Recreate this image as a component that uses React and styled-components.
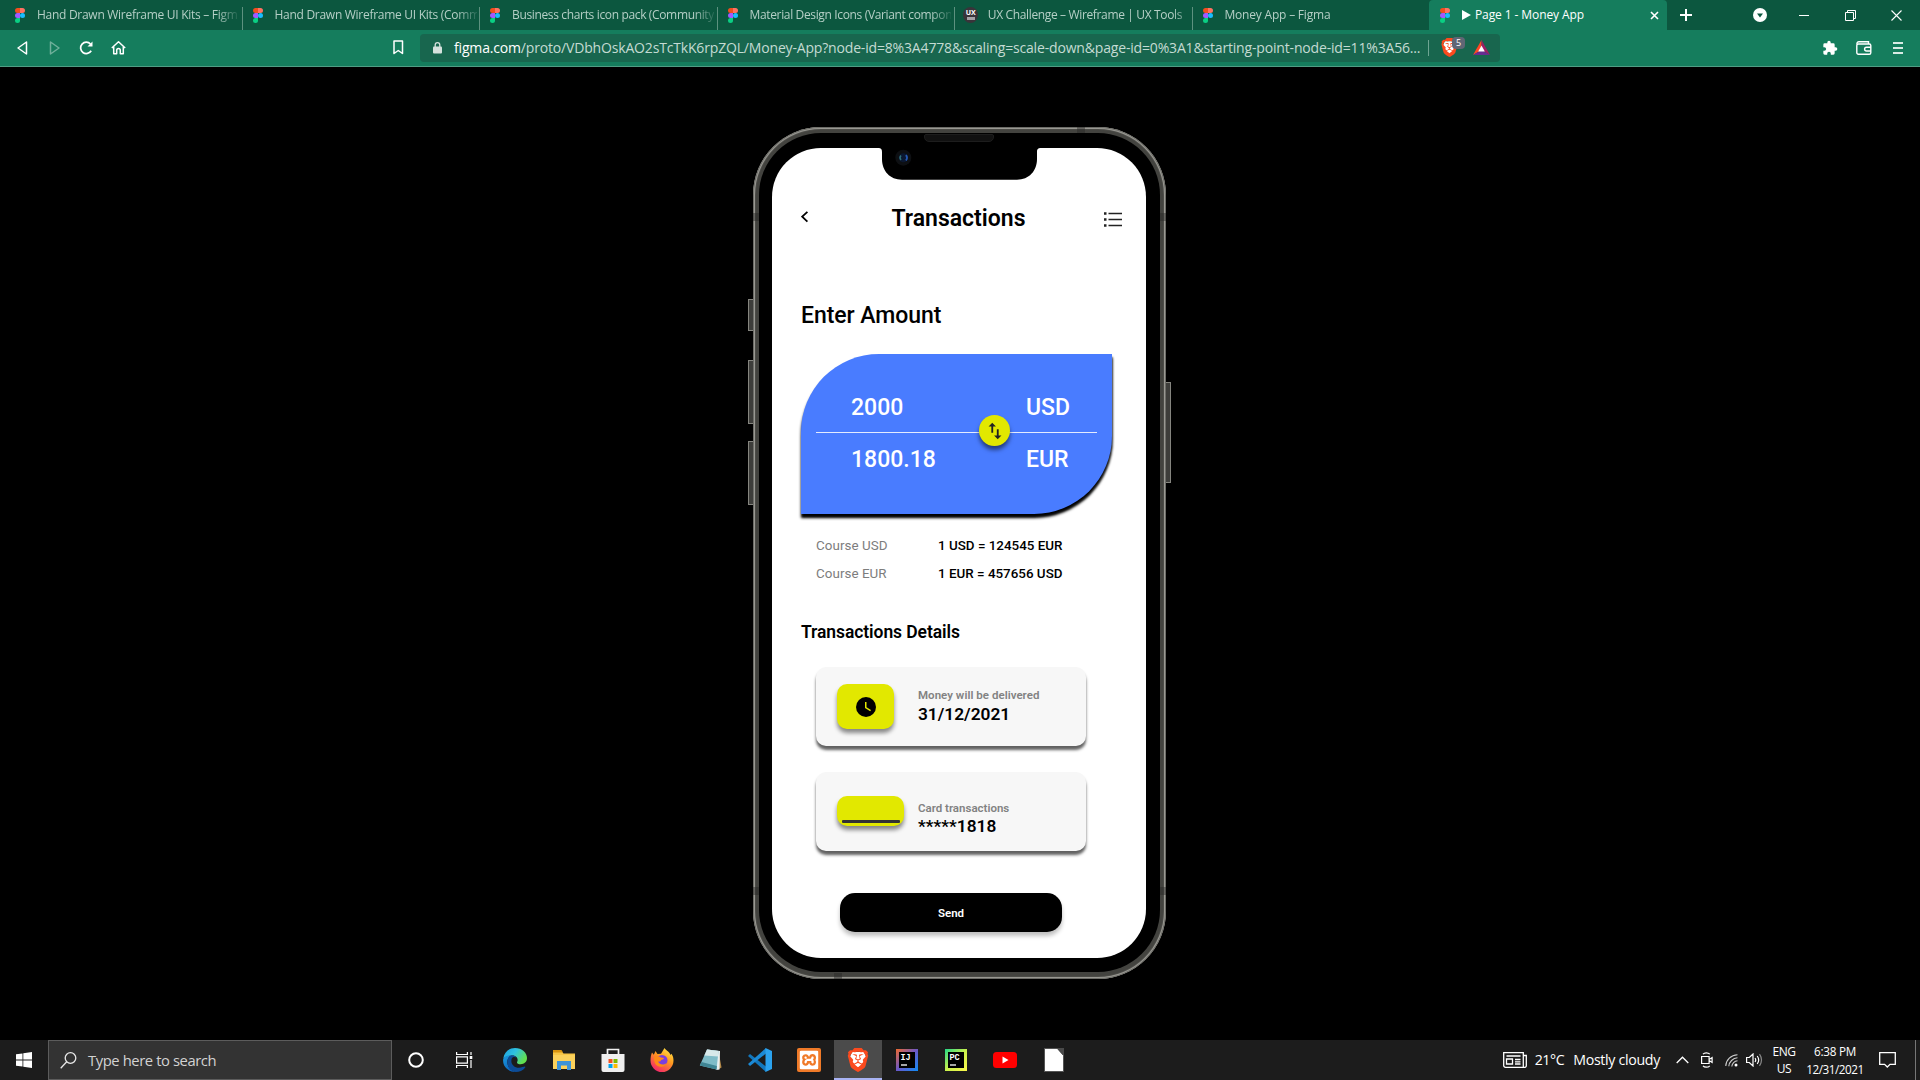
import React from "react";
import styled, { createGlobalStyle, css } from "styled-components";
import { SiBrave, SiXampp } from "react-icons/si";

const Global = createGlobalStyle`
  * { box-sizing: border-box; }
  body { margin: 0; background: #000; overflow: hidden; }
`;

const Page = styled.div`
  width: 1920px;
  height: 1080px;
  display: flex;
  flex-direction: column;
  background: #000;
  font-family: "Open Sans", "Noto Sans", sans-serif;
  overflow: hidden;
`;

const Label = styled.span`
  display: block;
  flex: none;
  white-space: nowrap;
  font-size: ${(p) => p.$size || 12}px;
  line-height: ${(p) => p.$lh || 20}px;
  font-weight: ${(p) => p.$weight || 400};
  letter-spacing: ${(p) => p.$ls || 0}px;
  color: ${(p) => p.$color || "#fff"};
`;

/* ---------- browser ---------- */
const TabStrip = styled.header`
  flex: none;
  height: 30px;
  padding-left: 5px;
  display: flex;
  background: #0c573f;
`;
const Tab = styled.div`
  flex: none;
  width: 237.5px;
  height: 30px;
  padding-left: 10px;
  display: flex;
  align-items: center;
  position: relative;
  ${(p) =>
    p.$active &&
    css`
      width: 238px;
      margin-left: -1px;
      padding-left: 11px;
      background: #157d5d;
      border-radius: 4px 4px 0 0;
    `}
  ${(p) =>
    p.$divider &&
    css`
      &::after {
        content: "";
        position: absolute;
        right: 0;
        top: 7px;
        width: 1px;
        height: 23px;
        background: #5d917f;
      }
    `}
`;
const TabTitle = styled.div`
  margin-left: ${(p) => p.$gap}px;
  width: ${(p) => p.$w}px;
  overflow: hidden;
  mask-image: linear-gradient(90deg, #000 90%, rgba(0, 0, 0, 0.15));
`;
const PlayMark = styled.svg`
  flex: none;
  margin: 0 4px 0 12px;
`;
const TabClose = styled.div`
  display: flex;
  margin-left: auto;
  margin-right: 8px;
`;
const WindowTools = styled.div`
  flex: 1;
  display: flex;
  align-items: center;
  padding: 0 17px 0 13px;
  svg { flex: none; }
`;
const Toolbar = styled.div`
  flex: none;
  height: 37px;
  display: flex;
  align-items: center;
  padding: 0 17px 1px 16px;
  background: #157d5d;
  border-bottom: 1px solid #4f9d84;
  svg { flex: none; display: block; }
`;
const NavGroup = styled.div`
  width: 377px;
  display: flex;
  gap: 15.5px;
  align-items: center;
`;
const Address = styled.div`
  margin-left: 16px;
  width: 1080px;
  height: 28px;
  border-radius: 4px;
  background: #18664e;
  display: flex;
  align-items: center;
  padding-left: 13px;
`;
const Url = styled.div`
  margin-left: 12px;
  width: 966px;
  display: flex;
`;
const Divider = styled.i`
  width: 1px;
  height: 16px;
  margin: 0 11px 0 8px;
  background: #6ea593;
`;
const Shield = styled.div`
  position: relative;
  width: 33px;
  height: 19px;
  display: flex;
`;
const Badge = styled.span`
  position: absolute;
  left: 12px;
  top: -1px;
  width: 13px;
  height: 12px;
  border-radius: 4px;
  background: #5f6675;
  color: #fff;
  font-size: 9px;
  line-height: 12px;
  text-align: center;
`;
const ToolEnd = styled.div`
  margin-left: auto;
  display: flex;
  align-items: center;
`;

/* ---------- phone ---------- */
const Stage = styled.main`
  flex: 1;
  padding: 60px 0 0 753px;
`;
const Phone = styled.div`
  position: relative;
  width: 413px;
  height: 852px;
  padding: 6px 6px 7px;
  border-radius: 68px;
  background: #43433f;
  box-shadow: inset 0 0 0 1px #6c6c67, inset 0 0 1px 2px #a3a29c;
`;
const Bezel = styled.div`
  height: 839px;
  padding: 15px 14px 14px 13px;
  border-radius: 62px;
  background: #000;
`;
const SideKey = styled.i`
  position: absolute;
  left: ${(p) => (p.$right ? 413 : -5)}px;
  top: ${(p) => p.$top}px;
  width: 5px;
  height: ${(p) => p.$h}px;
  background: #3d3d3a;
  border: 1px solid #85857f;
  border-${(p) => (p.$right ? "left" : "right")}: 0;
`;
const Band = styled.i`
  position: absolute;
  left: ${(p) => p.$x}px;
  top: ${(p) => p.$y}px;
  width: ${(p) => (p.$flat ? 8 : 6)}px;
  height: ${(p) => (p.$flat ? 6 : 8)}px;
  background: rgba(40, 40, 38, 0.45);
`;
const Speaker = styled.i`
  position: absolute;
  left: 171px;
  top: 7px;
  width: 70px;
  height: 8px;
  border-radius: 2px 2px 5px 5px;
  background: #111;
  border: 1px solid #1d1d1d;
`;
const Notch = styled.div`
  position: absolute;
  left: 125px;
  top: 20px;
`;
const Screen = styled.div`
  height: 810px;
  border-radius: 49px;
  background: #fff;
  font-family: Roboto, sans-serif;
  display: flex;
  flex-direction: column;
  overflow: hidden;
`;
const AppBar = styled.div`
  margin-top: 51px;
  height: 40px;
  padding: 0 24px 0 29px;
  display: flex;
  align-items: center;
  justify-content: space-between;
`;
const BackIcon = styled.svg`
  margin-bottom: 4px;
`;
const Heading = styled.div`
  margin: ${(p) => p.$top}px 0 0 29px;
  display: flex;
`;
const Exchange = styled.section`
  position: relative;
  margin: 23px 0 0 29px;
  width: 311px;
  height: 160px;
  padding-top: 31px;
  border-radius: 78px 0 78px 0;
  background: #497cff;
  box-shadow: 0 4px 3px #000, 1px 3px 2px rgba(0, 0, 0, 0.5);
`;
const MoneyRow = styled.div`
  height: 46px;
  padding-left: 50px;
  display: grid;
  grid-template-columns: 175px 1fr;
  align-items: center;
`;
const Rule = styled.i`
  display: block;
  width: 281px;
  height: 1px;
  margin: 1px 0 4px 15px;
  background: #e4ebff;
`;
const Swap = styled.div`
  position: absolute;
  left: 178px;
  top: 61px;
  width: 31px;
  height: 31px;
  border-radius: 50%;
  background: #e2e800;
  box-shadow: 0 4px 4px rgba(0, 0, 0, 0.5);
  display: flex;
  align-items: center;
  justify-content: center;
`;
const Rates = styled.div`
  margin: 18px 0 0 44px;
  display: grid;
  grid-template-columns: 122px 1fr;
  grid-auto-rows: 28px;
  align-items: center;
`;
const Cards = styled.div`
  margin: 23px 0 0 44px;
  display: flex;
  flex-direction: column;
  gap: 26px;
`;
const Card = styled.div`
  width: 270px;
  height: 79px;
  padding-left: 21px;
  border-radius: 10px;
  background: #f7f7f7;
  box-shadow: 0 4px 3px rgba(0, 0, 0, 0.62);
  display: flex;
  align-items: flex-start;
`;
const Tile = styled.div`
  width: ${(p) => p.$w}px;
  height: ${(p) => p.$h}px;
  margin-top: ${(p) => p.$top}px;
  border-radius: 10px;
  background: #e2e800;
  box-shadow: 0 4px 4px rgba(0, 0, 0, 0.45);
  display: flex;
  align-items: ${(p) => (p.$end ? "flex-end" : "center")};
  justify-content: center;
`;
const Stripe = styled.i`
  width: 58px;
  height: 3px;
  margin-bottom: 3px;
  border-radius: 1px;
  background: #333;
`;
const CardText = styled.div`
  margin-left: ${(p) => p.$left}px;
  margin-top: ${(p) => p.$top}px;
  display: flex;
  flex-direction: column;
`;
const Send = styled.button`
  margin: 42px 0 0 68px;
  width: 222px;
  height: 39px;
  padding: 0;
  border: 0;
  border-radius: 15px;
  background: #000;
  box-shadow: 0 4px 4px rgba(0, 0, 0, 0.25);
  font-family: inherit;
  display: flex;
  align-items: center;
  justify-content: center;
`;

/* ---------- taskbar ---------- */
const Taskbar = styled.footer`
  flex: none;
  height: 40px;
  display: flex;
  background: #1c1c1c;
`;
const Slot = styled.div`
  flex: none;
  width: ${(p) => p.$w || 49}px;
  height: 40px;
  display: flex;
  align-items: center;
  justify-content: center;
  ${(p) =>
    p.$active &&
    css`
      margin-left: 1px;
      padding-top: 2px;
      background: #4b4b4b;
      border-bottom: 2px solid #a9b3f3;
    `}
`;
const Search = styled.div`
  width: 344px;
  height: 40px;
  border: 1px solid #5c5c5c;
  background: #333;
  padding-left: 11px;
  display: flex;
  align-items: center;
  gap: 11px;
`;
const Tray = styled.div`
  margin-left: auto;
  display: flex;
  align-items: center;
  svg { flex: none; }
`;
const Stack = styled.div`
  margin-left: ${(p) => p.$left}px;
  width: ${(p) => p.$w}px;
  display: flex;
  flex-direction: column;
  align-items: center;
`;
const Gap = styled.i`
  flex: none;
  width: ${(p) => p.$w}px;
`;
const Edge = styled.i`
  width: 1px;
  height: 40px;
  background: #777;
  margin: 0 4px 0 19px;
`;

const FigmaMark = () => (
  <svg width="10" height="15" viewBox="0 0 10 15">
    <path d="M2.5 0H5v5H2.5a2.5 2.5 0 0 1 0-5z" fill="#f24e1e" />
    <path d="M5 0h2.5a2.5 2.5 0 0 1 0 5H5z" fill="#ff7262" />
    <path d="M2.5 5H5v5H2.5a2.5 2.5 0 0 1 0-5z" fill="#a259ff" />
    <circle cx="7.5" cy="7.5" r="2.5" fill="#1abcfe" />
    <path d="M2.5 10H5v2.5A2.5 2.5 0 1 1 2.500 10z" fill="#0acf83" />
  </svg>
);

const BraveMark = ({ size }) => (
  <svg width={size} height={size} viewBox="0 0 24 24">
    <path d="M6 4h12l2 5-3 9-5 4-5-4L4 9z" fill="#fff" />
    <SiBrave size={24} color="#fb4a1e" />
  </svg>
);

const UxBadge = styled.div`
  width: 16px;
  height: 16px;
  margin-left: -2px;
  border-radius: 50%;
  background: #39343a;
  color: #fff;
  font: 700 7px/6px "Open Sans", sans-serif;
  text-align: center;
  padding-top: 3px;
  &::after {
    content: "";
    display: block;
    width: 8px;
    height: 3px;
    margin: 1px auto 0;
    background: #a5a2a6;
  }
`;

const TABS = [
  { t: "Hand Drawn Wireframe UI Kits – Figma", w: 200, ls: -0.28 },
  { t: "Hand Drawn Wireframe UI Kits (Community)", w: 202, ls: -0.28 },
  { t: "Business charts icon pack (Community)", w: 202, ls: -0.35 },
  { t: "Material Design Icons (Variant components)", w: 201, ls: -0.35 },
  { t: "UX Challenge – Wireframe | UX Tools", w: 215, ls: -0.35, ux: true },
  { t: "Money App – Figma", w: 190, ls: -0.2, last: true },
];

function Browser() {
  return (
    <>
      <TabStrip>
        {TABS.map((tab) => (
          <Tab key={tab.t} $divider={!tab.last}>
            {tab.ux ? <UxBadge>UX</UxBadge> : <FigmaMark />}
            <TabTitle $w={tab.w} $gap={tab.ux ? 9.500 : 12}>
              <Label $size={12} $ls={tab.ls} $color="#b5cfc6">{tab.t}</Label>
            </TabTitle>
          </Tab>
        ))}
        <Tab $active>
          <FigmaMark />
          <PlayMark width="9" height="12" viewBox="0 0 9 12">
            <path d="M0 1v10l9-5z" fill="#fff" />
          </PlayMark>
          <Label $size={12} $ls={-0.1} $weight={500}>Page 1 - Money App</Label>
          <TabClose>
            <svg width="9" height="9" viewBox="0 0 9 9">
              <path d="M1 1l7 7M8 1L1 8" stroke="#fff" strokeWidth="1.6" />
            </svg>
          </TabClose>
        </Tab>
        <WindowTools>
          <svg width="12" height="12" viewBox="0 0 12 12">
            <path d="M6 0v12M0 6h12" stroke="#fff" strokeWidth="2" />
          </svg>
          <Gap $w={61} />
          <svg width="14" height="14" viewBox="0 0 14 14">
            <circle cx="7" cy="7" r="7" fill="#fff" />
            <path d="M4 5.500h6L7 9.500z" fill="#0c573f" />
          </svg>
          <Gap $w={32} />
          <svg width="10" height="1" viewBox="0 0 10 1"><path d="M0 .5h10" stroke="#fff" /></svg>
          <Gap $w={36} />
          <svg width="11" height="11" viewBox="0 0 11 11" fill="none" stroke="#fff">
            <path d="M.5 2.500h8v8h-8zM2.500 2.500v-2h8v8h-2" />
          </svg>
          <Gap $w={35} />
          <svg width="11" height="11" viewBox="0 0 11 11">
            <path d="M.5.5l10 10M10.500.5l-10 10" stroke="#fff" strokeWidth="1.1" />
          </svg>
        </WindowTools>
      </TabStrip>
      <Toolbar>
        <NavGroup>
          <svg width="16" height="16" viewBox="0 0 16 16" fill="none" stroke="#fff" strokeWidth="1.500" strokeLinejoin="round">
            <path d="M10.500 2v12L2 8z" />
          </svg>
          <svg width="16" height="16" viewBox="0 0 16 16" fill="none" stroke="#6fb09b" strokeWidth="1.500" strokeLinejoin="round">
            <path d="M2.500 2v12L11 8z" />
          </svg>
          <svg width="16" height="16" viewBox="0 0 16 16" fill="none" stroke="#fff" strokeWidth="1.700">
            <path d="M12.200 10.800A5.700 5.700 0 1 1 11.500 4" />
            <path d="M13.500 1.500v5h-5z" fill="#fff" stroke="none" />
          </svg>
          <svg width="16" height="16" viewBox="0 0 16 16" fill="none" stroke="#fff" strokeWidth="1.500" strokeLinejoin="round">
            <path d="M.8 8L7.500 1.800 14.200 8M2.700 6.800v7h3v-3.600a1.800 1.800 0 0 1 3.600 0v3.600h3v-7" />
          </svg>
        </NavGroup>
        <svg width="11" height="15" viewBox="0 0 11 15" fill="none" stroke="#fff" strokeWidth="1.500" strokeLinejoin="round">
          <path d="M1 1h8.500v12.500L5.250 10.500 1 13.500z" />
        </svg>
        <Address>
          <svg width="9" height="12" viewBox="0 0 9 12">
            <path d="M2.200 5V3a2.300 2.300 0 0 1 4.600 0v2" fill="none" stroke="#d5e2dd" strokeWidth="1.300" />
            <rect y="4.500" width="9" height="7" rx="1" fill="#d5e2dd" />
          </svg>
          <Url>
            <Label $size={14} $ls={-0.17}>figma.com</Label>
            <Label $size={14} $ls={-0.17} $color="#c4dbd3">
              /proto/VDbhOskAO2sTcTkK6rpZQL/Money-App?node-id=8%3A4778&amp;scaling=scale-down&amp;page-id=0%3A1&amp;starting-point-node-id=11%3A56...
            </Label>
          </Url>
          <Divider />
          <Shield>
            <BraveMark size={19} />
            <Badge>5</Badge>
          </Shield>
          <svg width="17" height="15" viewBox="0 0 17 15">
            <path d="M8.500 0L0 15l8.500-5z" fill="#ff4724" />
            <path d="M8.500 0L17 15l-8.500-5z" fill="#9e1f63" />
            <path d="M0 15h17l-8.500-5z" fill="#662d91" />
            <path d="M8.500 5.500L5.200 11.500h6.600z" fill="#fff" />
          </svg>
        </Address>
        <ToolEnd>
          <svg width="16" height="16" viewBox="0 0 24 24" fill="#fff">
            <path d="M20.500 11H19V7a2 2 0 0 0-2-2h-4V3.500a2.500 2.500 0 0 0-5 0V5H4a2 2 0 0 0-2 2v3.800h1.500a2.700 2.700 0 0 1 0 5.400H2V20a2 2 0 0 0 2 2h3.800v-1.500a2.700 2.700 0 0 1 5.400 0V22H17a2 2 0 0 0 2-2v-4h1.500a2.500 2.500 0 0 0 0-5z" />
          </svg>
          <Gap $w={18} />
          <svg width="16" height="14" viewBox="0 0 16 14" fill="none" stroke="#fff" strokeWidth="1.400">
            <rect x=".8" y="3" width="14" height="10.200" rx="1.500" />
            <path d="M1 3.500C.8 1.500 1.500.8 3 .8h9.500V3M15 6.200h-4.500a1.900 1.900 0 0 0 0 3.800H15" />
          </svg>
          <Gap $w={21} />
          <svg width="10" height="12" viewBox="0 0 10 12" stroke="#d8ebe4" strokeWidth="2">
            <path d="M0 1h10M0 6h10M0 11h10" />
          </svg>
        </ToolEnd>
      </Toolbar>
    </>
  );
}

function PhoneApp() {
  const big = { $size: 23, $lh: 30, $weight: 500 };
  return (
    <Stage>
      <Phone>
        <SideKey $top={172} $h={32} />
        <SideKey $top={233} $h={64} />
        <SideKey $top={314} $h={64} />
        <SideKey $right $top={255} $h={101} />
        <Bezel>
          <Screen>
            <AppBar>
              <BackIcon width="12" height="12" viewBox="0 0 12 12" fill="none" stroke="#000" strokeWidth="1.800">
                <path d="M6.400.8L1.200 5.700l5.200 4.900" />
              </BackIcon>
              <Label {...big} $weight={600} $color="#000">Transactions</Label>
              <svg width="18" height="15" viewBox="0 0 18 15" stroke="#222">
                <path d="M4.500 1.500H18M4.500 7.500H18M4.500 13.500H18" strokeWidth="1.500" />
                <path d="M0 1.500h2.500M0 7.500h2.500M0 13.500h2.500" strokeWidth="2.400" />
              </svg>
            </AppBar>
            <Heading $top={62}>
              <Label {...big} $ls={-0.05} $color="#000">Enter Amount</Label>
            </Heading>
            <Exchange>
              <MoneyRow>
                <Label {...big}>2000</Label>
                <Label {...big}>USD</Label>
              </MoneyRow>
              <Rule />
              <MoneyRow>
                <Label {...big}>1800.18</Label>
                <Label {...big}>EUR</Label>
              </MoneyRow>
              <Swap>
                <svg width="22" height="22" viewBox="0 0 24 24" fill="#222">
                  <path d="M16 17.010V10h-2v7.010h-3L15 21l4-3.990h-3zM9 3L5 6.990h3V14h2V6.990h3L9 3z" />
                </svg>
              </Swap>
            </Exchange>
            <Rates>
              <Label $size={13.4} $ls={0.05} $color="#7d7d7d">Course USD</Label>
              <Label $size={13.4} $weight={500} $color="#000">1 USD = 124545 EUR</Label>
              <Label $size={13.4} $ls={0.05} $color="#7d7d7d">Course EUR</Label>
              <Label $size={13.4} $weight={500} $color="#000">1 EUR = 457656 USD</Label>
            </Rates>
            <Heading $top={32}>
              <Label $size={17.5} $lh={24} $ls={-0.08} $weight={600} $color="#000">Transactions Details</Label>
            </Heading>
            <Cards>
              <Card>
                <Tile $w={57} $h={45} $top={17}>
                  <svg width="24" height="24" viewBox="0 0 24 24">
                    <circle cx="12" cy="12" r="10" fill="#000" />
                    <path d="M16.200 16.200L11 13V7h1.500v5.200l4.500 2.700z" fill="#e2e800" />
                  </svg>
                </Tile>
                <CardText $left={24} $top={20}>
                  <Label $size={11.5} $lh={16} $ls={0.03} $weight={600} $color="#828282">Money will be delivered</Label>
                  <Label $size={17.3} $lh={22} $weight={600} $color="#000">31/12/2021</Label>
                </CardText>
              </Card>
              <Card>
                <Tile $w={67} $h={30} $top={24} $end>
                  <Stripe />
                </Tile>
                <CardText $left={14} $top={28}>
                  <Label $size={11.5} $lh={16} $weight={600} $color="#828282">Card transactions</Label>
                  <Label $size={17.3} $lh={21} $weight={600} $color="#000">*****1818</Label>
                </CardText>
              </Card>
            </Cards>
            <Send>
              <Label $size={11.5} $weight={600}>Send</Label>
            </Send>
          </Screen>
        </Bezel>
        <Speaker />
        <Notch>
          <svg width="163" height="34" viewBox="0 0 163 34">
            <path d="M0 0h163v1c-3 0-4 1-4 4v7c0 12-8 20.700-20 20.700H24C12 32.700 4 24 4 12V5c0-3-1-4-4-4z" fill="#000" />
            <circle cx="25.300" cy="10.700" r="8" fill="#0d0f12" />
            <circle cx="25.300" cy="10.700" r="4.500" fill="#0a1730" />
            <path d="M23 8.500q-2 2 0 4.500" stroke="#2f6f77" strokeWidth="1.500" fill="none" />
            <path d="M28 8q2 2.500 0 5.500" stroke="#2559b5" strokeWidth="1.800" fill="none" />
          </svg>
        </Notch>
        <Band $x={0} $y={86} />
        <Band $x={407} $y={86} />
        <Band $x={0} $y={760} />
        <Band $x={407} $y={760} />
        <Band $flat $x={324} $y={0} />
        <Band $flat $x={81} $y={846} />
      </Phone>
    </Stage>
  );
}

const JetIcon = ({ id, a, b, c, text }) => (
  <svg width="22" height="22" viewBox="0 0 22 22">
    <defs>
      <linearGradient id={id} x1="0" y1="0" x2="1" y2="1">
        <stop offset="0" stopColor={a} />
        <stop offset=".5" stopColor={b} />
        <stop offset="1" stopColor={c} />
      </linearGradient>
    </defs>
    <rect width="22" height="22" fill={`url(#${id})`} />
    <rect x="3" y="3" width="16" height="16" fill="#000" />
    <text x="4.500" y="11" fill="#fff" fontSize="8.500" fontWeight="700" fontFamily="Liberation Mono, monospace">{text}</text>
    <path d="M5 16h6" stroke="#fff" strokeWidth="1.300" />
  </svg>
);

function Tasks() {
  return (
    <Taskbar>
      <Slot $w={48}>
        <svg width="16" height="16" viewBox="0 0 16 16" fill="#fff">
          <path d="M0 2.300L6.500 1.400v6.200H0zM7.300 1.300L16 0v7.600H7.300zM0 8.400h6.500v6.200L0 13.700zM7.300 8.400H16V16l-8.700-1.300z" />
        </svg>
      </Slot>
      <Search>
        <svg width="17" height="17" viewBox="0 0 17 17" fill="none" stroke="#e8e8e8" strokeWidth="1.300">
          <circle cx="10.500" cy="6" r="5.300" />
          <path d="M6.700 9.800L.7 16.200" />
        </svg>
        <Label $size={14.8} $ls={-0.42} $color="#d2d2d2">Type here to search</Label>
      </Search>
      <Slot $w={48}>
        <svg width="16" height="16" viewBox="0 0 16 16"><circle cx="8" cy="8" r="6.800" fill="none" stroke="#fff" strokeWidth="2" /></svg>
      </Slot>
      <Slot $w={48}>
        <svg width="17" height="16" viewBox="0 0 17 16" fill="none" stroke="#fff" strokeWidth="1.200">
          <path d="M.6 0v2.500h10.800V0M.6 16v-2.500h10.800V16M.6 4.800h10.800v6.400H.6zM15 0v3M15 8v8" />
          <path d="M15 4v3" strokeWidth="2.600" />
        </svg>
      </Slot>
      <Gap $w={2} />
      <Slot>
        <svg width="24" height="24" viewBox="0 0 24 24">
          <defs>
            <linearGradient id="eg1" x1="0" y1="0" x2="1" y2=".5">
              <stop offset="0" stopColor="#1b9de2" /><stop offset=".5" stopColor="#2fc2df" /><stop offset="1" stopColor="#62e04f" />
            </linearGradient>
            <linearGradient id="eg2" x1="0" y1="0" x2=".6" y2="1">
              <stop offset="0" stopColor="#1b9de2" /><stop offset="1" stopColor="#0b5fb8" />
            </linearGradient>
          </defs>
          <path d="M.3 10.500C1.200 4.300 6 0 12 0c7 0 12 4.800 12 10 0 4-3 6.200-6.200 6.200-3 0-4.300-1.200-3.600-2.400 1-1.500.8-6.300-5-6.300-4.200 0-7.500 1.500-8.900 3z" fill="url(#eg1)" />
          <path d="M.2 11c1-2.300 4-4 8-3.800-2.500 1.300-3.900 4-3.900 6.800 0 4.500 3.200 8.500 8.200 9.900C5.800 24-.8 19 .2 11z" fill="url(#eg2)" />
          <path d="M8.900 10.200c-2 5 1.800 9.500 7 9.500 2.700 0 4.700-1.200 5.900-1.200.8 0 .7.800 0 1.500-2 2.400-5.300 4-9 4C7.400 23 4.300 19 4.300 14c0-3 2-5.800 4-6.800 2 0 4 .8 5 2.300-1.600-.9-3.500-.7-4.400.7z" fill="#0d4c97" />
        </svg>
      </Slot>
      <Slot>
        <svg width="22" height="22" viewBox="0 0 22 22">
          <path d="M0 2h8.500l2 2.500H22V20H0z" fill="#f7c545" />
          <path d="M0 1h8.500l1.500 2.500H0z" fill="#d8930f" />
          <path d="M0 6h22v14H0z" fill="#fbd15b" />
          <path d="M4 12h14v9h-4v-4.500H8V21H4z" fill="#3c93d8" />
        </svg>
      </Slot>
      <Slot>
        <svg width="24" height="24" viewBox="0 0 24 24">
          <path d="M6.500 6V1.500h11V6" fill="none" stroke="#f2f2f2" strokeWidth="1.700" />
          <path d="M.5 6h23v16a2 2 0 0 1-2 2h-19a2 2 0 0 1-2-2z" fill="#efefef" />
          <path d="M7.500 11h4v4h-4z" fill="#f25022" /><path d="M12.500 11h4v4h-4z" fill="#7fba00" />
          <path d="M7.500 16h4v4h-4z" fill="#00a4ef" /><path d="M12.500 16h4v4h-4z" fill="#ffb900" />
        </svg>
      </Slot>
      <Slot>
        <svg width="24" height="24" viewBox="0 0 24 24">
          <defs>
            <linearGradient id="ff" x1=".9" y1="0" x2=".3" y2="1">
              <stop offset="0" stopColor="#ffee4a" /><stop offset=".45" stopColor="#ff9a1f" /><stop offset="1" stopColor="#f4246a" />
            </linearGradient>
          </defs>
          <path d="M2 4.500L3.800 6.700 5.500 3l2 3 3.500-.2L14.500 0c1 2 5 3.500 6 7l1-1.200C23 8 23.500 10 23.500 12.500a11.500 11.500 0 0 1-23 0C.5 9.500 1 6.500 2 4.500z" fill="url(#ff)" />
          <circle cx="12" cy="12.500" r="5.500" fill="#7a3fe0" />
          <path d="M4.500 8.500c3-.7 5-.2 6.500 1l3 .5c-.5 1.500-2 1.500-3 2 0 1.200-1.500 2-3 1.500 1.500 3 6 4.500 9 1-1 5-10 6.500-12.300 0-.7-2-.7-4.500-.2-6z" fill="#ff8a16" />
        </svg>
      </Slot>
      <Slot>
        <svg width="24" height="24" viewBox="0 0 24 24">
          <path d="M19.500 3l3 16.500-3.500 2z" fill="#b58a4a" />
          <path d="M8 1.500l13 1.500-.5 18.500-3 .5z" fill="#e8eff0" />
          <path d="M8 1.500L19.500 3 17.500 21.500.8 17.500z" fill="#7fbcc8" />
          <path d="M8 1.500L19.500 3l-.6 5.500L5.300 7.500z" fill="#d8e9ea" />
          <path d="M.8 17.500l16.700 4 .4-3.500L2.500 14z" fill="#3f8594" />
        </svg>
      </Slot>
      <Slot>
        <svg width="24" height="24" viewBox="0 0 24 24">
          <path d="M0 8l2-2 16 12.500V24z" fill="#1277bd" />
          <path d="M0 16l2 2L18 5.500V0z" fill="#1b8ad6" />
          <path d="M17.500 0L24 3v18l-6.500 3z" fill="#2ba2ee" />
        </svg>
      </Slot>
      <Slot>
        <svg width="24" height="24" viewBox="0 0 24 24">
          <rect width="24" height="24" rx="2" fill="#f07a28" />
          <SiXampp x="2.500" y="2.500" size={19} color="#fff" />
        </svg>
      </Slot>
      <Slot $active $w={48}>
        <BraveMark size={24} />
      </Slot>
      <Slot><JetIcon id="ij" a="#f0692c" b="#6a58c8" c="#0e8cf7" text="IJ" /></Slot>
      <Slot><JetIcon id="pc" a="#21d789" b="#c8f04c" c="#fcf84a" text="PC" /></Slot>
      <Slot>
        <svg width="24" height="16" viewBox="0 0 24 16">
          <rect width="24" height="16" rx="3.500" fill="#f00" />
          <path d="M9.500 4.500v7l6-3.500z" fill="#fff" />
        </svg>
      </Slot>
      <Slot>
        <svg width="20" height="24" viewBox="0 0 20 24">
          <path d="M.5.5h13l6 7v16H.5z" fill="#fff" stroke="#555" />
          <path d="M12.500 0H20v8z" fill="#4a4a4a" />
        </svg>
      </Slot>
      <Tray>
        <svg width="24" height="16" viewBox="0 0 24 16" fill="none" stroke="#fff" strokeWidth="1.300">
          <path d="M.7.7h19.600v14.600H2.500A1.800 1.800 0 0 1 .7 13.500zM20.300 3.500h3V13.500a1.800 1.800 0 0 1-3 1.500M3.500 4h14M3.500 7h6v5h-6zM12 7.500h5.500M12 9.800h5.500M12 12h5.500" />
        </svg>
        <Gap $w={8} />
        <Label $size={14.2} $ls={-0.4}>21°C</Label>
        <Gap $w={9} />
        <Label $size={14.2} $ls={-0.32}>Mostly cloudy</Label>
        <Gap $w={16} />
        <svg width="13" height="8" viewBox="0 0 13 8"><path d="M.7 7L6.500 1.200 12.300 7" fill="none" stroke="#fff" strokeWidth="1.300" /></svg>
        <Gap $w={12} />
        <svg width="12" height="16" viewBox="0 0 12 16" fill="none" stroke="#fff" strokeWidth="1.200">
          <path d="M.6 4.500h7.500v7H.6zM8.100 7.500l3-2v5l-3-2M2 2.200C3.500.4 7 .4 8.800 2.200M2 13.800c1.500 1.800 5 1.800 6.800 0" />
        </svg>
        <Gap $w={12} />
        <svg width="13" height="13" viewBox="0 0 13 13" fill="none" stroke="#ccc" strokeWidth="1.100">
          <path d="M.8 12C1 6 6 1 12.500.8M3.800 12.300C4 8 8 4 12.500 3.800M6.800 12.500c.2-3 2.700-5.500 5.700-5.700" />
          <circle cx="11" cy="11" r="1.500" fill="#fff" stroke="none" />
        </svg>
        <Gap $w={8} />
        <svg width="17" height="14" viewBox="0 0 17 14" fill="none" stroke="#fff" strokeWidth="1.200">
          <path d="M.6 4.500h2.700L7 1v12L3.300 9.500H.6zM9 5q1.500 2 0 4M11.200 3q3 4 0 8" />
          <path d="M13.500 1.200q4 5.800 0 11.600" stroke="#888" />
        </svg>
        <Stack $left={8} $w={26}>
          <Label $size={12} $lh={17} $ls={-0.5}>ENG</Label>
          <Label $size={12} $lh={17} $ls={-0.5}>US</Label>
        </Stack>
        <Stack $left={8} $w={60}>
          <Label $size={11.7} $lh={18} $ls={-0.25}>6:38 PM</Label>
          <Label $size={11.7} $lh={18} $ls={-0.45}>12/31/2021</Label>
        </Stack>
        <Gap $w={14} />
        <svg width="17" height="16" viewBox="0 0 17 16" fill="none" stroke="#fff" strokeWidth="1.300">
          <path d="M.7.7h15.600v11.600H11L8.300 15l-2.700-2.700H.7z" />
        </svg>
        <Edge />
      </Tray>
    </Taskbar>
  );
}

export default function App() {
  return (
    <Page>
      <Global />
      <Browser />
      <PhoneApp />
      <Tasks />
    </Page>
  );
}
